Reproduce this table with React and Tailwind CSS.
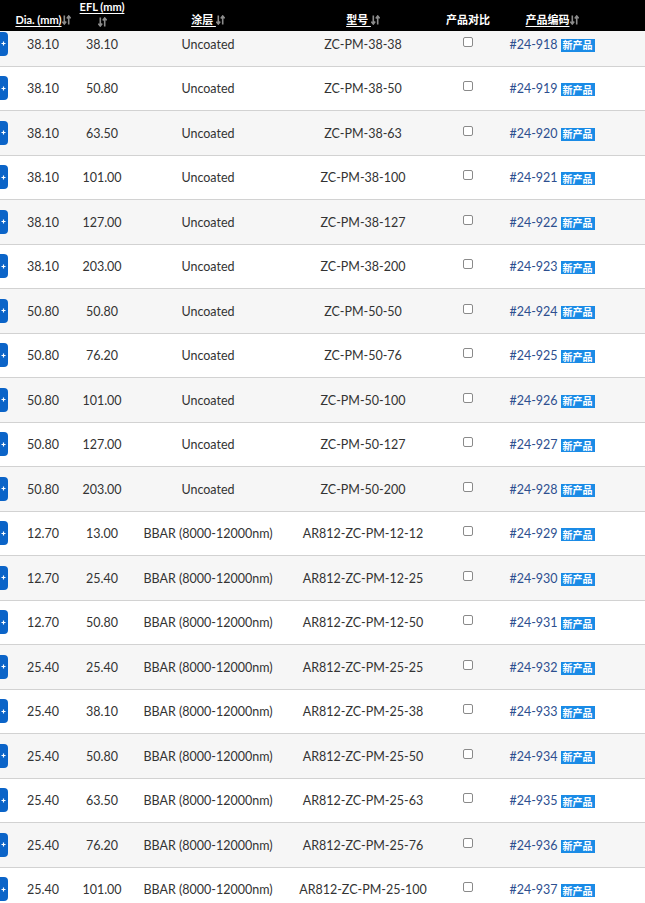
import React from "react";

const C = "BBAR (8000-12000nm)";
const rows = [
  ["38.10", "38.10", "Uncoated", "ZC-PM-38-38", "#24-918"],
  ["38.10", "50.80", "Uncoated", "ZC-PM-38-50", "#24-919"],
  ["38.10", "63.50", "Uncoated", "ZC-PM-38-63", "#24-920"],
  ["38.10", "101.00", "Uncoated", "ZC-PM-38-100", "#24-921"],
  ["38.10", "127.00", "Uncoated", "ZC-PM-38-127", "#24-922"],
  ["38.10", "203.00", "Uncoated", "ZC-PM-38-200", "#24-923"],
  ["50.80", "50.80", "Uncoated", "ZC-PM-50-50", "#24-924"],
  ["50.80", "76.20", "Uncoated", "ZC-PM-50-76", "#24-925"],
  ["50.80", "101.00", "Uncoated", "ZC-PM-50-100", "#24-926"],
  ["50.80", "127.00", "Uncoated", "ZC-PM-50-127", "#24-927"],
  ["50.80", "203.00", "Uncoated", "ZC-PM-50-200", "#24-928"],
  ["12.70", "13.00", C, "AR812-ZC-PM-12-12", "#24-929"],
  ["12.70", "25.40", C, "AR812-ZC-PM-12-25", "#24-930"],
  ["12.70", "50.80", C, "AR812-ZC-PM-12-50", "#24-931"],
  ["25.40", "25.40", C, "AR812-ZC-PM-25-25", "#24-932"],
  ["25.40", "38.10", C, "AR812-ZC-PM-25-38", "#24-933"],
  ["25.40", "50.80", C, "AR812-ZC-PM-25-50", "#24-934"],
  ["25.40", "63.50", C, "AR812-ZC-PM-25-63", "#24-935"],
  ["25.40", "76.20", C, "AR812-ZC-PM-25-76", "#24-936"],
  ["25.40", "101.00", C, "AR812-ZC-PM-25-100", "#24-937"],
];

const GRID = "grid grid-cols-[14px_58px_60px_152px_158px_52px_116px_1fr]";

function SortIcon() {
  return (
    <svg width="9" height="10" viewBox="0 0 9 10" className="shrink-0">
      <g stroke="#8c8c8c" strokeWidth="1.6" fill="none">
        <path d="M2.3 0.5V9" />
        <path d="M0.4 6.6L2.3 9L4.2 6.6" />
        <path d="M6.7 1V9.5" />
        <path d="M4.8 3.4L6.7 1L8.6 3.4" />
      </g>
    </svg>
  );
}

function H({ children, icon = true }) {
  return (
    <span className="inline-flex items-center">
      <span className="underline underline-offset-2">{children}</span>
      {icon && <SortIcon />}
    </span>
  );
}

export default function App() {
  return (
    <div
      className="h-[903px] w-[645px] overflow-hidden bg-white"
      style={{ fontFamily: "Lato, 'Noto Sans CJK SC', sans-serif" }}
    >
      <div className={`${GRID} relative z-10 h-[31px] bg-black text-[11px] font-bold leading-[14px] text-white`}>
        <div />
        <div className="flex items-end justify-center pb-[4px]">
          <H>Dia. (mm)</H>
        </div>
        <div className="flex flex-col items-center justify-end pb-[4px]">
          <span className="underline underline-offset-2">EFL (mm)</span>
          <span className="mt-[3px]"><SortIcon /></span>
        </div>
        <div className="flex items-end justify-center pb-[4px]">
          <H>涂层&nbsp;</H>
        </div>
        <div className="flex items-end justify-center pb-[4px]">
          <H>型号&nbsp;</H>
        </div>
        <div className="flex items-end justify-center pb-[4px]">
          <span>产品对比</span>
        </div>
        <div className="flex items-end justify-center pb-[4px]">
          <H>产品编码</H>
        </div>
        <div />
      </div>
      <div className="-mt-[9px]">
        {rows.map((r, i) => (
          <div
            key={i}
            className={`${GRID} h-[44.5px] border-b border-[#d2d2d2] text-[12.5px] text-[#333] ${
              i % 2 === 0 ? "bg-[#f6f6f6]" : "bg-white"
            }`}
          >
            <div className="flex items-center">
              <div className="flex h-[24px] w-[8px] items-center rounded-r-[4px] bg-[#0b64c8] pl-[1px]">
                <svg width="5" height="5" viewBox="0 0 5 5">
                  <path d="M2.5 0.5V4.5M0.5 2.5H4.5" stroke="white" strokeWidth="1.2" />
                </svg>
              </div>
            </div>
            <div className="flex items-center justify-center pt-[3px]">{r[0]}</div>
            <div className="flex items-center justify-center pt-[3px]">{r[1]}</div>
            <div className="flex items-center justify-center pt-[3px]">{r[2]}</div>
            <div className="flex items-center justify-center pt-[3px]">{r[3]}</div>
            <div className="flex items-center justify-center">
              <span className="mb-[4px] block h-[10px] w-[10px] rounded-[2px] border border-[#8a8a8a] bg-white" />
            </div>
            <div className="flex items-center justify-center gap-[3px] pt-[3px]">
              <span className="text-[#2d4f8f]">{r[4]}</span>
              <span className="flex h-[13px] items-center bg-[#1a8be6] px-[2px] text-[10px] font-bold leading-none text-white">
                新产品
              </span>
            </div>
            <div />
          </div>
        ))}
      </div>
    </div>
  );
}
